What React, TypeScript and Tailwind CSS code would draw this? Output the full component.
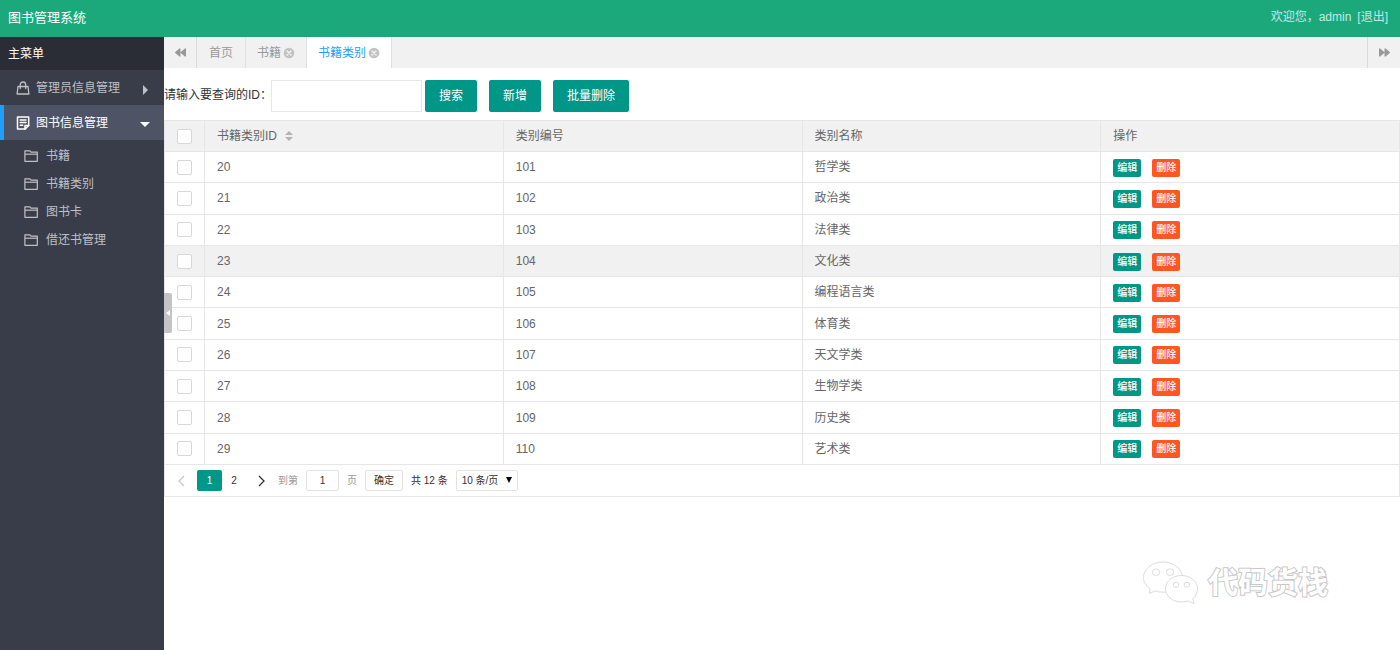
import type { ReactNode } from 'react';
import { FaBackward, FaForward } from 'react-icons/fa';

const BOOK_TYPES = [
  { id: 20, code: 101, name: '哲学类' },
  { id: 21, code: 102, name: '政治类' },
  { id: 22, code: 103, name: '法律类' },
  { id: 23, code: 104, name: '文化类' },
  { id: 24, code: 105, name: '编程语言类' },
  { id: 25, code: 106, name: '体育类' },
  { id: 26, code: 107, name: '天文学类' },
  { id: 27, code: 108, name: '生物学类' },
  { id: 28, code: 109, name: '历史类' },
  { id: 29, code: 110, name: '艺术类' },
];

const HOVERED_ID = 23;

function LockBagIcon() {
  return (
    <svg viewBox="0 0 14 14" className="size-3.5 shrink-0" fill="none" stroke="currentColor" strokeWidth="1.3" strokeLinejoin="round" aria-hidden="true">
      <path d="M2 5.500h10l.9 7.500H1.100z" />
      <path d="M4.300 7.600V3.700C4.300 2 5.400 1 7 1s2.700 1 2.700 2.700v3.900" strokeLinecap="round" />
    </svg>
  );
}

function NoteIcon() {
  return (
    <svg viewBox="0 0 14 14" className="size-3.5 shrink-0" fill="none" stroke="currentColor" strokeWidth="1.5" strokeLinejoin="round" aria-hidden="true">
      <path d="M1.500 .9h11.200v8.500l-3.700 3.700H1.500z" />
      <path d="M12.700 9.400H9v3.700M4.200 4h5.800M4.200 6.600h5.800M4.200 9.200h2.500" strokeLinecap="round" />
    </svg>
  );
}

function FolderIcon() {
  return (
    <svg viewBox="0 0 14 12" className="h-3 w-3.5 shrink-0" fill="none" stroke="currentColor" strokeWidth="1.200" strokeLinejoin="round" aria-hidden="true">
      <path d="M.9 11.300V.8h5l1.100 1.300h6.300v9.200z" />
      <path d="M.9 4.200h12.400" />
    </svg>
  );
}

function CloseIcon() {
  return (
    <svg viewBox="0 0 12 12" className="size-3 shrink-0" aria-hidden="true">
      <circle cx="6" cy="6" r="5.300" fill="#c2c2c2" />
      <path d="M4 4l4 4M8 4L4 8" stroke="#f4f4f4" strokeWidth="1.300" strokeLinecap="round" />
    </svg>
  );
}

function Chevron({ d }: { d: string }) {
  return (
    <svg viewBox="0 0 8 12" className="h-3 w-2" fill="none" stroke="currentColor" strokeWidth="1.300" aria-hidden="true">
      <path d={d} />
    </svg>
  );
}

function SubItem({ children }: { children: ReactNode }) {
  return (
    <li>
      <a href="#" className="flex h-7 items-center gap-2 pl-6">
        <FolderIcon />
        {children}
      </a>
    </li>
  );
}

function ToolButton({ children }: { children: ReactNode }) {
  return (
    <button type="button" className="h-8 rounded-xs bg-[#009688] px-3.5 text-white">
      {children}
    </button>
  );
}

function Check({ label }: { label: string }) {
  return (
    <input
      type="checkbox"
      aria-label={label}
      className="mx-auto block size-[15px] appearance-none rounded-xs border border-[#d8d8d8] bg-white checked:bg-[#009688]"
    />
  );
}

function Sidebar() {
  return (
    <nav className="relative w-41 shrink-0 bg-[#393d49] text-[#bfc0c4]">
      <h2 className="flex h-[33px] items-center bg-[#2a2d36] pl-2 text-white">主菜单</h2>
      <a href="#" className="flex h-[35px] items-center gap-1.5 pr-4 pl-4">
        <LockBagIcon />
        <span className="grow">管理员信息管理</span>
        <svg viewBox="0 0 5 10" className="mt-1 h-2.5 w-[5px]" fill="currentColor" aria-hidden="true">
          <path d="M0 0l5 5-5 5z" />
        </svg>
      </a>
      <a href="#" className="flex h-[35px] items-center gap-1.5 border-l-4 border-[#1e9fff] bg-[#4e5465] pr-3.5 pl-3 text-white">
        <NoteIcon />
        <span className="grow">图书信息管理</span>
        <svg viewBox="0 0 10 5" className="mt-1 h-[5px] w-2.5" fill="currentColor" aria-hidden="true">
          <path d="M0 0h10L5 5z" />
        </svg>
      </a>
      <ul className="pt-0.5">
        <SubItem>书籍</SubItem>
        <SubItem>书籍类别</SubItem>
        <SubItem>图书卡</SubItem>
        <SubItem>借还书管理</SubItem>
      </ul>
      <button
        type="button"
        aria-label="收起菜单"
        className="absolute top-64 left-full z-10 flex h-10 w-2 items-center justify-center rounded-r-xs bg-[#c4c4c4] text-white"
      >
        <svg viewBox="0 0 4 6" className="h-1.5 w-1" fill="currentColor" aria-hidden="true">
          <path d="M4 0v6L0 3z" />
        </svg>
      </button>
    </nav>
  );
}

function TabBar() {
  return (
    <div className="flex h-[31px] bg-[#f1f1f1] text-[#999]">
      <button type="button" aria-label="向左" className="flex w-[33px] items-center justify-center border-r border-[#d9d9d9]">
        <FaBackward size={11} />
      </button>
      <a href="#" className="flex items-center border-r border-[#e0e0e0] px-3">首页</a>
      <a href="#" className="flex items-center gap-0.5 border-r border-[#e0e0e0] px-[11px]">
        书籍
        <CloseIcon />
      </a>
      <a href="#" className="flex items-center gap-0.5 border-r border-[#e0e0e0] bg-white px-[11px] text-[#1e9fff]">
        书籍类别
        <CloseIcon />
      </a>
      <button type="button" aria-label="向右" className="ml-auto flex w-[33px] items-center justify-center border-l border-[#d9d9d9]">
        <FaForward size={11} />
      </button>
    </div>
  );
}

function BookTypeTable() {
  return (
    <table className="h-[345px] w-full table-fixed border-collapse border border-[#e6e6e6] text-left text-[#666]">
      <colgroup>
        <col className="w-10" />
        <col />
        <col />
        <col />
        <col />
      </colgroup>
      <thead>
        <tr className="h-[31px] border-b border-[#e6e6e6] bg-[#f1f1f1]">
          <th className="border-r border-[#e6e6e6]">
            <Check label="全选" />
          </th>
          <th className="border-r border-[#e6e6e6] px-3 font-normal">
            <span className="flex items-center gap-2">
              书籍类别ID
              <svg viewBox="0 0 8 10" className="h-2.5 w-2" fill="#b2b2b2" aria-hidden="true">
                <path d="M4 0l4 4H0zM4 10L0 6h8z" />
              </svg>
            </span>
          </th>
          <th className="border-r border-[#e6e6e6] px-3 font-normal">类别编号</th>
          <th className="border-r border-[#e6e6e6] px-3 font-normal">类别名称</th>
          <th className="px-3 font-normal">操作</th>
        </tr>
      </thead>
      <tbody>
        {BOOK_TYPES.map((t) => (
          <tr key={t.id} className={t.id === HOVERED_ID ? 'border-b border-[#e6e6e6] bg-[#f1f1f1]' : 'border-b border-[#e6e6e6]'}>
            <td className="border-r border-[#e6e6e6]">
              <Check label={'选择 ' + t.id} />
            </td>
            <td className="border-r border-[#e6e6e6] px-3">{t.id}</td>
            <td className="border-r border-[#e6e6e6] px-3">{t.code}</td>
            <td className="border-r border-[#e6e6e6] px-3">{t.name}</td>
            <td className="px-3">
              <div className="flex gap-[11px] pt-px text-[10px] leading-[18px] font-medium text-white">
                <button type="button" className="w-7 rounded-xs bg-[#009688]">编辑</button>
                <button type="button" className="w-7 rounded-xs bg-[#ff5722]">删除</button>
              </div>
            </td>
          </tr>
        ))}
      </tbody>
    </table>
  );
}

function Pager() {
  return (
    <div className="flex h-8 items-center border-x border-b border-[#e6e6e6] text-[10px] text-[#333]">
      <button type="button" aria-label="上一页" className="flex w-8 justify-center text-[#c8c8c8]">
        <Chevron d="M7 1L2 6l5 5" />
      </button>
      <button type="button" className="h-[21px] w-[25px] rounded-xs bg-[#009688] text-white">1</button>
      <button type="button" className="w-6">2</button>
      <button type="button" aria-label="下一页" className="flex w-8 justify-center">
        <Chevron d="M1 1l5 5-5 5" />
      </button>
      <label className="flex items-center gap-2 text-[#999]">
        到第
        <input type="text" defaultValue="1" className="h-[21px] w-[33px] rounded-xs border border-[#e2e2e2] text-center text-[#333]" />
        页
      </label>
      <button type="button" className="ml-2 h-[21px] w-[38px] rounded-xs border border-[#e2e2e2]">确定</button>
      <span className="ml-2">共 12 条</span>
      <div className="relative ml-2">
        <select aria-label="每页条数" className="block h-[21px] w-[62px] appearance-none rounded-xs border border-[#e2e2e2] bg-white pl-[5px]">
          <option>10 条/页</option>
          <option>20 条/页</option>
        </select>
        <svg viewBox="0 0 6 6" className="pointer-events-none absolute top-[7px] right-1.5 size-1.5" fill="#000" aria-hidden="true">
          <path d="M0 0h6L3 6z" />
        </svg>
      </div>
    </div>
  );
}

function Watermark() {
  return (
    <div className="pointer-events-none absolute right-[72px] bottom-11 flex items-center gap-2">
      <svg viewBox="0 0 58 46" className="h-[46px] w-[58px]" fill="#fff" stroke="#dcdcdc" strokeWidth="1" aria-hidden="true">
        <path d="M21 2C10.500 2 1.500 8.500 1.500 17.500c0 4.600 2.500 8.300 6.500 11L7.500 33.500l5.500-2.500c2.300.7 5 1.200 8 1.200 10.500 0 19.500-6 19.500-14.700S31.500 2 21 2z" />
        <rect x="10.500" y="9" width="7" height="6.500" rx="3" />
        <rect x="24.500" y="9" width="7" height="6.500" rx="3" />
        <path d="M39.500 15.500c-9.200 0-16 6-16 13.200s6.800 13.300 16 13.300c2.500 0 4.700-.3 6.700-1l6 2.500-1.500-4.800c3-2.500 4.800-6 4.800-10 0-7.200-6.800-13.200-16-13.200z" />
        <rect x="31.500" y="22.500" width="5" height="4.500" rx="1.500" />
        <rect x="42.500" y="22.500" width="5" height="4.500" rx="1.500" />
      </svg>
      <span className="text-3xl font-bold text-white [paint-order:stroke_fill] [-webkit-text-stroke:2px_#c8c8c8]">代码货栈</span>
    </div>
  );
}

export default function App() {
  return (
    <div className="relative flex min-h-screen flex-col bg-white font-['Liberation_Sans','Noto_Sans_CJK_SC',sans-serif] text-xs text-[#333]">
      <header className="flex h-[37px] items-center justify-between bg-[#1ba97b] pr-3 pl-2">
        <h1 className="pb-0.5 text-[13px] text-white">图书管理系统</h1>
        <div className="flex gap-1.5 pb-1 text-[#c5e6e6]">
          <span>欢迎您，admin</span>
          <a href="#">[退出]</a>
        </div>
      </header>
      <div className="flex grow">
        <Sidebar />
        <main className="min-w-0 grow">
          <TabBar />
          <form className="flex items-center pt-3 pb-2" onSubmit={(e) => e.preventDefault()}>
            <label htmlFor="type-id" className="w-[107px] shrink-0 pb-0.5 whitespace-nowrap">
              请输入要查询的ID：
            </label>
            <input id="type-id" type="text" className="mr-[3px] h-8 w-[151px] border border-[#e6e6e6] px-2" />
            <div className="flex gap-3">
              <ToolButton>搜索</ToolButton>
              <ToolButton>新增</ToolButton>
              <ToolButton>批量删除</ToolButton>
            </div>
          </form>
          <BookTypeTable />
          <Pager />
        </main>
      </div>
      <Watermark />
    </div>
  );
}
